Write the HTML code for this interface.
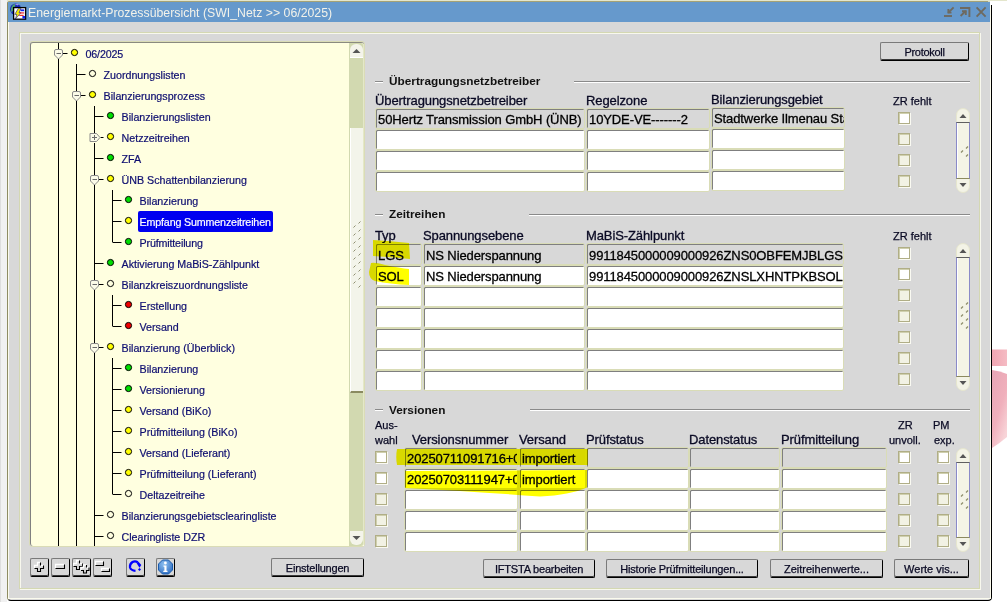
<!DOCTYPE html><html><head><meta charset="utf-8"><style>
html,body{margin:0;padding:0}
body{width:1007px;height:602px;position:relative;overflow:hidden;background:#fff;font-family:"Liberation Sans",sans-serif}
.a{position:absolute;box-sizing:border-box}
.t{position:absolute;white-space:pre;line-height:1}
.fld{position:absolute;box-sizing:border-box;border:1px solid #d9dcb6;box-shadow:inset 1px 1px 0 #7f7f7f;background:#fff;border-radius:2px;overflow:hidden;font-size:13px;color:#000;white-space:pre;line-height:1}
.fld.g{background:#d8d8d8}
.fld span{position:absolute;left:2px;top:4px;letter-spacing:-0.1px;-webkit-text-stroke:0.3px #000}
.cb{position:absolute;box-sizing:border-box;width:12px;height:12px;border:1px solid #b0ae86;box-shadow:inset 1px 1px 0 #cfcfae,1px 1px 0 #fafaf2;background:#f2f2e4}
.cb.w{background:#fff}
.btn{position:absolute;box-sizing:border-box;border:1px solid #7a7a7a;border-right:1px solid #000;border-bottom:1px solid #000;box-shadow:inset 0 -1px 0 #3a3a3a;border-radius:2px;background:#d8d8d8;font-size:11px;color:#0a0a24;text-align:center;line-height:1}
.btn span{position:absolute;left:0;right:0;top:4px;-webkit-text-stroke:0.25px #0a0a24}
.sec{position:absolute;height:1px;background:#8a8a8a}
.secT{position:absolute;font-weight:bold;font-size:11.8px;color:#111;white-space:pre;line-height:1}
.hdr{position:absolute;font-size:13px;color:#0a0a24;white-space:pre;line-height:1;letter-spacing:-0.1px;-webkit-text-stroke:0.3px #0a0a24}
.sm{position:absolute;font-size:11px;color:#0a0a24;white-space:pre;line-height:1;-webkit-text-stroke:0.25px #0a0a24}
.tr{position:absolute;font-size:10.7px;color:#0e0e70;white-space:pre;line-height:1;-webkit-text-stroke:0.2px #0e0e70}
</style></head><body>
<div class="a" style="left:0px;top:0px;width:1px;height:602px;background:#dedede"></div>
<div class="a" style="left:1px;top:0px;width:6px;height:602px;background:#f1f1f1"></div>
<div class="a" style="left:7px;top:0px;width:1000px;height:1px;background:#e4e6cc"></div>
<svg class="a" style="left:992px;top:340px" width="15" height="115"><defs><linearGradient id="pk" x1="0" x2="1"><stop offset="0" stop-color="#f0a6b2"/><stop offset="1" stop-color="#f5bcc4"/></linearGradient><linearGradient id="pk2" x1="0" y1="0" x2="0.6" y2="1"><stop offset="0" stop-color="#e6a4b4"/><stop offset="0.6" stop-color="#f0b0bc"/><stop offset="1" stop-color="#f8d4d8"/></linearGradient></defs><rect x="0" y="9.5" width="15" height="16.5" fill="url(#pk)"/><path d="M0 30 Q8 31 15 34 L15 97 Q8 103 0 108 Z" fill="url(#pk2)"/></svg>
<div class="a" style="left:7px;top:1px;width:985px;height:600px;background:#d8d8d8;border-left:1px solid #8e8c62;border-top:1px solid #a4a276;border-right:1px solid #000;border-bottom:1px solid #000;border-radius:2px 3px 4px 4px"></div>
<div class="a" style="left:990px;top:1px;width:2px;height:4px;background:#fff"></div>
<div class="a" style="left:988px;top:1px;width:2px;height:1px;background:#d8dcc0"></div>
<div class="a" style="left:8px;top:22px;width:1px;height:577px;background:#fbfbee"></div>
<div class="a" style="left:990px;top:5px;width:1px;height:594px;background:#fbfbee"></div>
<div class="a" style="left:9px;top:598px;width:981px;height:1px;background:#fbfbee"></div>
<div class="a" style="left:8px;top:2px;width:982px;height:20px;background:#6699cc"></div>
<div class="t" style="left:28px;top:7px;font-size:12.3px;color:#f2f2ea">Energiemarkt-Prozessübersicht (SWI_Netz &gt;&gt; 06/2025)</div>
<svg class="a" style="left:9px;top:2px" width="18" height="19" viewBox="0 0 18 19">
<circle cx="6.6" cy="7.2" r="5.6" fill="#1828b8"/><path d="M2.2 10.5 Q0.8 5.5 5 2 L6.5 2.8 L4.5 8 Z" fill="#4aa070"/><path d="M5.5 2 Q8 1.2 10 2.2 L8.5 3.5 Z" fill="#9a9ae8"/>
<rect x="4.6" y="5.6" width="12" height="11.6" fill="#fff" stroke="#000" stroke-width="1.3"/>
<path d="M9.2 6.6 L12 6.6 L10 10.6 L12 10.6 L6.4 17 L7.8 12.4 L5.8 12.4 Z" fill="#f4ec00" stroke="#10108a" stroke-width="0.6"/>
<rect x="11.6" y="7.4" width="3.6" height="1.8" fill="#1020e8"/><rect x="10.8" y="10.4" width="4.4" height="1.1" fill="#e81818"/><rect x="10.2" y="12.8" width="4.4" height="1.1" fill="#e81818"/><rect x="13.4" y="14" width="2.8" height="2.6" fill="#1020e8"/>
</svg>
<svg class="a" style="left:940px;top:5px" width="50" height="14" viewBox="0 0 50 14" fill="none" stroke="#6e6a60" stroke-width="1.9">
<path d="M4 11 H12"/><path d="M13.6 2.4 L8.2 7.8"/><path d="M8.4 4 V7.6 H11.5" />
<path d="M20 3 H29.4 V12"/><path d="M20.6 11 L25.8 5.8"/><path d="M22 6.2 H25.8 V10" />
<path d="M36.6 2.4 L45.6 11.6 M45.6 2.4 L36.6 11.6"/>
</svg>
<div class="a" style="left:20px;top:33px;width:961px;height:557px;border:1px solid #f8f8ee"></div>
<div class="a" style="left:19px;top:32px;width:961px;height:557px;border:1px solid #d4d8b2"></div>
<div class="a" style="left:29px;top:41px;width:336px;height:506px;border:1px solid #dadcb6;border-radius:3px"></div>
<div class="a" style="left:30px;top:42px;width:334px;height:504px;background:#ffffe0;border-left:1px solid #808080;border-top:1px solid #8a8a80;border-radius:3px 3px 0 3px"></div>
<svg class="a" style="left:0;top:0" width="364" height="546" viewBox="0 0 364 546"><g stroke="#000" stroke-width="1" fill="none"><path d="M58.5 43 V49"/><path d="M63.0 53.5 H67.5"/><path d="M76.5 64 V74"/><path d="M76.5 74.5 H85.5"/><path d="M76.5 74 V91"/><path d="M81.0 95.5 H85.5"/><path d="M94.5 106 V116"/><path d="M94.5 116.5 H103.5"/><path d="M94.5 116 V133"/><path d="M100.5 137.5 H103.5"/><path d="M94.5 143 V158"/><path d="M94.5 158.5 H103.5"/><path d="M94.5 158 V175"/><path d="M99.0 179.5 H103.5"/><path d="M112.5 190 V200"/><path d="M112.5 200.5 H121.5"/><path d="M112.5 200 V221"/><path d="M112.5 221.5 H121.5"/><path d="M112.5 221 V242"/><path d="M112.5 242.5 H121.5"/><path d="M94.5 185 V263"/><path d="M94.5 263.5 H103.5"/><path d="M94.5 263 V280"/><path d="M99.0 284.5 H103.5"/><path d="M112.5 295 V305"/><path d="M112.5 305.5 H121.5"/><path d="M112.5 305 V326"/><path d="M112.5 326.5 H121.5"/><path d="M94.5 290 V343"/><path d="M99.0 347.5 H103.5"/><path d="M112.5 358 V368"/><path d="M112.5 368.5 H121.5"/><path d="M112.5 368 V389"/><path d="M112.5 389.5 H121.5"/><path d="M112.5 389 V410"/><path d="M112.5 410.5 H121.5"/><path d="M112.5 410 V431"/><path d="M112.5 431.5 H121.5"/><path d="M112.5 431 V452"/><path d="M112.5 452.5 H121.5"/><path d="M112.5 452 V473"/><path d="M112.5 473.5 H121.5"/><path d="M112.5 473 V494"/><path d="M112.5 494.5 H121.5"/><path d="M94.5 353 V515"/><path d="M94.5 515.5 H103.5"/><path d="M94.5 515 V536"/><path d="M94.5 536.5 H103.5"/><path d="M58.5 59 V546"/><path d="M76.5 101 V546"/><path d="M94.5 536 V546"/></g><path d="M54.5 51 Q54.5 49.5 56.0 49.5 H61.0 Q62.5 49.5 62.5 51 V55 L58.5 59 L54.5 55 Z" fill="#fbfbe8" stroke="#8a8a8a" stroke-width="1"/><path d="M56.5 53.5 H61.0" stroke="#6a6a6a" stroke-width="1"/><path d="M72.5 93 Q72.5 91.5 74.0 91.5 H79.0 Q80.5 91.5 80.5 93 V97 L76.5 101 L72.5 97 Z" fill="#fbfbe8" stroke="#8a8a8a" stroke-width="1"/><path d="M74.5 95.5 H79.0" stroke="#6a6a6a" stroke-width="1"/><path d="M90.0 133.5 H96.5 L100.0 137.5 L96.5 141.5 H90.0 Z" fill="#fbfbe8" stroke="#8a8a8a" stroke-width="1"/><path d="M92.0 137.5 H97.0 M94.5 135 V140" stroke="#6a6a6a" stroke-width="1"/><path d="M90.5 177 Q90.5 175.5 92.0 175.5 H97.0 Q98.5 175.5 98.5 177 V181 L94.5 185 L90.5 181 Z" fill="#fbfbe8" stroke="#8a8a8a" stroke-width="1"/><path d="M92.5 179.5 H97.0" stroke="#6a6a6a" stroke-width="1"/><path d="M90.5 282 Q90.5 280.5 92.0 280.5 H97.0 Q98.5 280.5 98.5 282 V286 L94.5 290 L90.5 286 Z" fill="#fbfbe8" stroke="#8a8a8a" stroke-width="1"/><path d="M92.5 284.5 H97.0" stroke="#6a6a6a" stroke-width="1"/><path d="M90.5 345 Q90.5 343.5 92.0 343.5 H97.0 Q98.5 343.5 98.5 345 V349 L94.5 353 L90.5 349 Z" fill="#fbfbe8" stroke="#8a8a8a" stroke-width="1"/><path d="M92.5 347.5 H97.0" stroke="#6a6a6a" stroke-width="1"/><circle cx="74.5" cy="52.5" r="3.1" fill="#ffff00" stroke="#000" stroke-width="1"/><circle cx="92.5" cy="73.5" r="3.1" fill="#ffffe0" stroke="#000" stroke-width="1"/><circle cx="92.5" cy="94.5" r="3.1" fill="#ffff00" stroke="#000" stroke-width="1"/><circle cx="110.5" cy="115.5" r="3.1" fill="#00dd00" stroke="#000" stroke-width="1"/><circle cx="110.5" cy="136.5" r="3.1" fill="#ffff00" stroke="#000" stroke-width="1"/><circle cx="110.5" cy="157.5" r="3.1" fill="#00dd00" stroke="#000" stroke-width="1"/><circle cx="110.5" cy="178.5" r="3.1" fill="#ffff00" stroke="#000" stroke-width="1"/><circle cx="128.5" cy="199.5" r="3.1" fill="#00dd00" stroke="#000" stroke-width="1"/><circle cx="128.5" cy="220.5" r="3.1" fill="#ffff00" stroke="#000" stroke-width="1"/><circle cx="128.5" cy="241.5" r="3.1" fill="#00dd00" stroke="#000" stroke-width="1"/><circle cx="110.5" cy="262.5" r="3.1" fill="#00dd00" stroke="#000" stroke-width="1"/><circle cx="110.5" cy="283.5" r="3.1" fill="#ffffe0" stroke="#000" stroke-width="1"/><circle cx="128.5" cy="304.5" r="3.1" fill="#ee0000" stroke="#000" stroke-width="1"/><circle cx="128.5" cy="325.5" r="3.1" fill="#ee0000" stroke="#000" stroke-width="1"/><circle cx="110.5" cy="346.5" r="3.1" fill="#ffff00" stroke="#000" stroke-width="1"/><circle cx="128.5" cy="367.5" r="3.1" fill="#00dd00" stroke="#000" stroke-width="1"/><circle cx="128.5" cy="388.5" r="3.1" fill="#00dd00" stroke="#000" stroke-width="1"/><circle cx="128.5" cy="409.5" r="3.1" fill="#ffff00" stroke="#000" stroke-width="1"/><circle cx="128.5" cy="430.5" r="3.1" fill="#ffff00" stroke="#000" stroke-width="1"/><circle cx="128.5" cy="451.5" r="3.1" fill="#ffff00" stroke="#000" stroke-width="1"/><circle cx="128.5" cy="472.5" r="3.1" fill="#ffff00" stroke="#000" stroke-width="1"/><circle cx="128.5" cy="493.5" r="3.1" fill="#ffffe0" stroke="#000" stroke-width="1"/><circle cx="110.5" cy="514.5" r="3.1" fill="#ffffe0" stroke="#000" stroke-width="1"/><circle cx="110.5" cy="535.5" r="3.1" fill="#ffffe0" stroke="#000" stroke-width="1"/></svg>
<div class="a" style="left:138px;top:211px;width:135px;height:21px;background:#0000f0;border-radius:2px"></div>
<div class="tr" style="left:85.5px;top:49px;color:#0e0e70;-webkit-text-stroke-color:#0e0e70;letter-spacing:-0.15px;">06/2025</div>
<div class="tr" style="left:103.5px;top:70px;color:#0e0e70;-webkit-text-stroke-color:#0e0e70;">Zuordnungslisten</div>
<div class="tr" style="left:103.5px;top:91px;color:#0e0e70;-webkit-text-stroke-color:#0e0e70;">Bilanzierungsprozess</div>
<div class="tr" style="left:121.5px;top:112px;color:#0e0e70;-webkit-text-stroke-color:#0e0e70;">Bilanzierungslisten</div>
<div class="tr" style="left:121.5px;top:133px;color:#0e0e70;-webkit-text-stroke-color:#0e0e70;">Netzzeitreihen</div>
<div class="tr" style="left:121.5px;top:154px;color:#0e0e70;-webkit-text-stroke-color:#0e0e70;">ZFA</div>
<div class="tr" style="left:121.5px;top:175px;color:#0e0e70;-webkit-text-stroke-color:#0e0e70;">ÜNB Schattenbilanzierung</div>
<div class="tr" style="left:139.5px;top:196px;color:#0e0e70;-webkit-text-stroke-color:#0e0e70;">Bilanzierung</div>
<div class="tr" style="left:139.5px;top:217px;color:#fff;-webkit-text-stroke-color:#fff;letter-spacing:-0.15px;">Empfang Summenzeitreihen</div>
<div class="tr" style="left:139.5px;top:238px;color:#0e0e70;-webkit-text-stroke-color:#0e0e70;letter-spacing:-0.15px;">Prüfmitteilung</div>
<div class="tr" style="left:121.5px;top:259px;color:#0e0e70;-webkit-text-stroke-color:#0e0e70;">Aktivierung MaBiS-Zählpunkt</div>
<div class="tr" style="left:121.5px;top:280px;color:#0e0e70;-webkit-text-stroke-color:#0e0e70;">Bilanzkreiszuordnungsliste</div>
<div class="tr" style="left:139.5px;top:301px;color:#0e0e70;-webkit-text-stroke-color:#0e0e70;">Erstellung</div>
<div class="tr" style="left:139.5px;top:322px;color:#0e0e70;-webkit-text-stroke-color:#0e0e70;">Versand</div>
<div class="tr" style="left:121.5px;top:343px;color:#0e0e70;-webkit-text-stroke-color:#0e0e70;">Bilanzierung (Überblick)</div>
<div class="tr" style="left:139.5px;top:364px;color:#0e0e70;-webkit-text-stroke-color:#0e0e70;">Bilanzierung</div>
<div class="tr" style="left:139.5px;top:385px;color:#0e0e70;-webkit-text-stroke-color:#0e0e70;">Versionierung</div>
<div class="tr" style="left:139.5px;top:406px;color:#0e0e70;-webkit-text-stroke-color:#0e0e70;">Versand (BiKo)</div>
<div class="tr" style="left:139.5px;top:427px;color:#0e0e70;-webkit-text-stroke-color:#0e0e70;">Prüfmitteilung (BiKo)</div>
<div class="tr" style="left:139.5px;top:448px;color:#0e0e70;-webkit-text-stroke-color:#0e0e70;">Versand (Lieferant)</div>
<div class="tr" style="left:139.5px;top:469px;color:#0e0e70;-webkit-text-stroke-color:#0e0e70;">Prüfmitteilung (Lieferant)</div>
<div class="tr" style="left:139.5px;top:490px;color:#0e0e70;-webkit-text-stroke-color:#0e0e70;">Deltazeitreihe</div>
<div class="tr" style="left:121.5px;top:511px;color:#0e0e70;-webkit-text-stroke-color:#0e0e70;">Bilanzierungsgebietsclearingliste</div>
<div class="tr" style="left:121.5px;top:532px;color:#0e0e70;-webkit-text-stroke-color:#0e0e70;">Clearingliste DZR</div>
<div class="a" style="left:349px;top:43px;width:15px;height:503px;background:#d2d9b0;border-right:1px solid #e4e8c8;border-radius:0 3px 3px 0"></div>
<div class="a" style="left:350px;top:44px;width:13px;height:14px;background:#f4f4ea;border-radius:6px 6px 0 0;border-bottom:1px solid #fff"></div>
<svg class="a" style="left:350px;top:44px" width="14" height="14"><path d="M2.5 9 L6.5 5 L10.5 9Z" fill="#555"/></svg>
<div class="a" style="left:350px;top:128px;width:13px;height:265px;background:#f3f4ea;border-left:1px solid #fff;border-bottom:2px solid #8a8a60"></div>
<svg class="a" style="left:350px;top:215px" width="14" height="80" stroke="#8e8e70" stroke-width="1"><path d="M8.5 8.5 l2 -2"/><path d="M8.5 16.5 l2 -2"/><path d="M8.5 24.5 l2 -2"/><path d="M8.5 32.5 l2 -2"/><path d="M8.5 40.5 l2 -2"/><path d="M8.5 48.5 l2 -2"/><path d="M8.5 56.5 l2 -2"/><path d="M8.5 64.5 l2 -2"/><path d="M8.5 72.5 l2 -2"/><path d="M3.5 12.5 l2 -2"/><path d="M3.5 20.5 l2 -2"/><path d="M3.5 28.5 l2 -2"/><path d="M3.5 36.5 l2 -2"/><path d="M3.5 44.5 l2 -2"/><path d="M3.5 52.5 l2 -2"/><path d="M3.5 60.5 l2 -2"/><path d="M3.5 68.5 l2 -2"/></svg>
<div class="a" style="left:350px;top:531px;width:13px;height:14px;background:#f4f4ea;border-radius:0 0 6px 6px"></div>
<svg class="a" style="left:350px;top:531px" width="14" height="14"><path d="M2.5 5 L6.5 9 L10.5 5Z" fill="#555"/></svg>
<div class="btn" style="left:30px;top:558px;width:19px;height:19px;border-bottom-width:1px;overflow:hidden"><svg width="19" height="19" style="position:absolute;left:-1px;top:-1px"><path d="M4.5 10.5 V7.5 H7.5 V4.5 H10.5 M10.5 7.5 H13.5" stroke="#fff" stroke-width="1.3" fill="none"/><path d="M10.5 4.5 V7.5 M13.5 7.5 V10.5 H10.5 V13.5 H7.5 V10.5 H4.5" stroke="#000" stroke-width="1.1" fill="none"/></svg></div>
<div class="btn" style="left:51px;top:558px;width:19px;height:19px;border-bottom-width:1px;overflow:hidden"><svg width="19" height="19" style="position:absolute;left:-1px;top:-1px"><path d="M4.5 10.5 V6.5 H13.5" stroke="#fff" stroke-width="1.3" fill="none"/><path d="M13.5 6.5 V10.5 H4.5" stroke="#000" stroke-width="1.1" fill="none"/></svg></div>
<div class="btn" style="left:72px;top:558px;width:19px;height:19px;border-bottom-width:1px;overflow:hidden"><svg width="19" height="19" style="position:absolute;left:-1px;top:-1px"><path d="M1.5 8.5 V5.5 H4.5 V2.5 H7.5 M7.5 5.5 H10.5" stroke="#fff" stroke-width="1.3" fill="none"/><path d="M7.5 2.5 V5.5 M10.5 5.5 V8.5 H7.5 V11.5 H4.5 V8.5 H1.5" stroke="#000" stroke-width="1.1" fill="none"/><path d="M9 12.5 V9.5 H11.5 V7 H14.5 M14.5 9.5 H17" stroke="#fff" stroke-width="1.3" fill="none"/><path d="M14.5 7 V9.5 M17 9.5 V12.5 H14.5 V15 H11.5 V12.5 H9" stroke="#000" stroke-width="1.1" fill="none"/></svg></div>
<div class="btn" style="left:93px;top:558px;width:19px;height:19px;border-bottom-width:1px;overflow:hidden"><svg width="19" height="19" style="position:absolute;left:-1px;top:-1px"><path d="M2.5 7.5 V3.5 H10.5" stroke="#fff" stroke-width="1.3" fill="none"/><path d="M10.5 3.5 V7.5 H2.5" stroke="#000" stroke-width="1.1" fill="none"/><path d="M8.5 13.5 V10.5 H16.5" stroke="#fff" stroke-width="1.3" fill="none"/><path d="M16.5 10.5 V13.5 H8.5" stroke="#000" stroke-width="1.1" fill="none"/></svg></div>
<div class="btn" style="left:126px;top:558px;width:19px;height:19px;border-bottom-width:1px;overflow:hidden"><svg width="19" height="19" style="position:absolute;left:-1px;top:-1px"><path d="M11.8 4.2 Q9 2.5 6.5 4 Q3.5 6 4 9.5 Q5 12.5 9.5 12.8" fill="none" stroke="#0000ff" stroke-width="2.2"/><path d="M10.5 5 L12.5 3.8 L15.3 7 L13.5 9.8 Z" fill="#0000ff"/><path d="M13.5 10 L15 11.5 L13.5 13 L12 11.5Z" fill="#0000ff"/></svg></div>
<div class="btn" style="left:156px;top:558px;width:19px;height:19px;border-bottom-width:1px;overflow:hidden"><svg width="19" height="19" style="position:absolute;left:-1px;top:-1px"><defs><radialGradient id="ig" cx="0.4" cy="0.3" r="0.8"><stop offset="0" stop-color="#8ec0f0"/><stop offset="1" stop-color="#2a6ac0"/></radialGradient></defs><path d="M6.5 2 H12.5 L16.5 6 V12 L12.5 16 H6.5 L2.5 12 V6Z" fill="url(#ig)" stroke="#1a5aaa" stroke-width="1"/><circle cx="9.4" cy="5" r="1.4" fill="#fff"/><path d="M7.5 7.5 H10.5 V12.8 H11.5 V14 H7.3 V12.8 H8.4 V8.7 H7.5Z" fill="#fff"/></svg></div>
<div class="btn" style="left:271px;top:558px;width:93px;height:19px"><span style="top:4px;letter-spacing:-0.2px">Einstellungen</span></div>
<div class="btn" style="left:880px;top:42px;width:89px;height:19px"><span style="top:4px;letter-spacing:-0.3px">Protokoll</span></div>
<div class="sec" style="left:375px;top:81px;width:8px"></div>
<div class="sec" style="left:375px;top:82px;width:8px;background:#fff"></div>
<div class="secT" style="left:389px;top:76px">Übertragungsnetzbetreiber</div>
<div class="sec" style="left:574px;top:81px;width:396px"></div>
<div class="sec" style="left:574px;top:82px;width:396px;background:#fff"></div>
<div class="sec" style="left:375px;top:214px;width:8px"></div>
<div class="sec" style="left:375px;top:215px;width:8px;background:#fff"></div>
<div class="secT" style="left:389px;top:209px">Zeitreihen</div>
<div class="sec" style="left:529px;top:214px;width:441px"></div>
<div class="sec" style="left:529px;top:215px;width:441px;background:#fff"></div>
<div class="sec" style="left:375px;top:409px;width:8px"></div>
<div class="sec" style="left:375px;top:410px;width:8px;background:#fff"></div>
<div class="secT" style="left:389px;top:405px">Versionen</div>
<div class="sec" style="left:530px;top:409px;width:440px"></div>
<div class="sec" style="left:530px;top:410px;width:440px;background:#fff"></div>
<div class="hdr" style="left:375px;top:94px">Übertragungsnetzbetreiber</div>
<div class="hdr" style="left:586px;top:94px">Regelzone</div>
<div class="hdr" style="left:711px;top:93px">Bilanzierungsgebiet</div>
<div class="sm" style="left:893px;top:96px">ZR fehlt</div>
<div class="fld g" style="left:375px;top:108px;width:210px;height:21px"><span>50Hertz Transmission GmbH (ÜNB)</span></div>
<div class="fld g" style="left:586px;top:108px;width:124px;height:21px"><span>10YDE-VE-------2</span></div>
<div class="fld g" style="left:711px;top:107px;width:134px;height:21px"><span>Stadtwerke Ilmenau Stadtwerke</span></div>
<div class="cb w" style="left:898px;top:112px"></div>
<div class="fld" style="left:375px;top:129px;width:210px;height:21px"><span></span></div>
<div class="fld" style="left:586px;top:129px;width:124px;height:21px"><span></span></div>
<div class="fld" style="left:711px;top:128px;width:134px;height:21px"><span></span></div>
<div class="cb" style="left:898px;top:133px"></div>
<div class="fld" style="left:375px;top:150px;width:210px;height:21px"><span></span></div>
<div class="fld" style="left:586px;top:150px;width:124px;height:21px"><span></span></div>
<div class="fld" style="left:711px;top:149px;width:134px;height:21px"><span></span></div>
<div class="cb" style="left:898px;top:154px"></div>
<div class="fld" style="left:375px;top:171px;width:210px;height:21px"><span></span></div>
<div class="fld" style="left:586px;top:171px;width:124px;height:21px"><span></span></div>
<div class="fld" style="left:711px;top:170px;width:134px;height:21px"><span></span></div>
<div class="cb" style="left:898px;top:175px"></div>
<div class="a" style="left:956px;top:108px;width:14px;height:85px;background:#f3f3e6;border-radius:7px;border:1px solid #e6e6ce"></div>
<svg class="a" style="left:956px;top:108px" width="14" height="15"><path d="M3.5 10 L7 6 L10.5 10Z" fill="#555"/></svg>
<svg class="a" style="left:956px;top:178px" width="14" height="15"><path d="M3.5 5 L7 9 L10.5 5Z" fill="#555"/></svg>
<div class="a" style="left:956px;top:122px;width:14px;height:57px;border-left:1px solid #8a8ac8;border-right:1px solid #8a8ac8;border-top:1px solid #606060;border-bottom:1px solid #8c8a5e;background:#f4f4e6;box-shadow:inset 1px 0 0 #fff"></div>
<svg class="a" style="left:0;top:0" width="1007" height="602" stroke="#8c8c6a" stroke-width="1.2" fill="none"><path d="M966 148.5 l2 -2"/><path d="M966 156.5 l2 -2"/><path d="M961 152.5 l2 -2"/></svg>
<div class="hdr" style="left:375px;top:229px">Typ</div>
<div class="hdr" style="left:423px;top:229px">Spannungsebene</div>
<div class="hdr" style="left:586px;top:229px">MaBiS-Zählpunkt</div>
<div class="sm" style="left:893px;top:231px">ZR fehlt</div>
<div class="fld g" style="left:375px;top:243px;width:47px;height:22px"><span style="top:5px">LGS</span></div>
<div class="fld g" style="left:423px;top:243px;width:162px;height:22px"><span style="top:5px">NS Niederspannung</span></div>
<div class="fld g" style="left:586px;top:243px;width:258px;height:22px"><span style="top:5px">9911845000009000926ZNS0OBFEMJBLGS</span></div>
<div class="cb w" style="left:898px;top:247px"></div>
<div class="fld" style="left:375px;top:265px;width:47px;height:21px"><span>SOL</span></div>
<div class="fld" style="left:423px;top:265px;width:162px;height:21px"><span>NS Niederspannung</span></div>
<div class="fld" style="left:586px;top:265px;width:258px;height:21px"><span>9911845000009000926ZNSLXHNTPKBSOL</span></div>
<div class="cb w" style="left:898px;top:268px"></div>
<div class="fld" style="left:375px;top:286px;width:47px;height:21px"><span></span></div>
<div class="fld" style="left:423px;top:286px;width:162px;height:21px"><span></span></div>
<div class="fld" style="left:586px;top:286px;width:258px;height:21px"><span></span></div>
<div class="cb" style="left:898px;top:289px"></div>
<div class="fld" style="left:375px;top:307px;width:47px;height:21px"><span></span></div>
<div class="fld" style="left:423px;top:307px;width:162px;height:21px"><span></span></div>
<div class="fld" style="left:586px;top:307px;width:258px;height:21px"><span></span></div>
<div class="cb" style="left:898px;top:310px"></div>
<div class="fld" style="left:375px;top:328px;width:47px;height:21px"><span></span></div>
<div class="fld" style="left:423px;top:328px;width:162px;height:21px"><span></span></div>
<div class="fld" style="left:586px;top:328px;width:258px;height:21px"><span></span></div>
<div class="cb" style="left:898px;top:331px"></div>
<div class="fld" style="left:375px;top:349px;width:47px;height:21px"><span></span></div>
<div class="fld" style="left:423px;top:349px;width:162px;height:21px"><span></span></div>
<div class="fld" style="left:586px;top:349px;width:258px;height:21px"><span></span></div>
<div class="cb" style="left:898px;top:352px"></div>
<div class="fld" style="left:375px;top:370px;width:47px;height:21px"><span></span></div>
<div class="fld" style="left:423px;top:370px;width:162px;height:21px"><span></span></div>
<div class="fld" style="left:586px;top:370px;width:258px;height:21px"><span></span></div>
<div class="cb" style="left:898px;top:373px"></div>
<div class="a" style="left:956px;top:243px;width:14px;height:148px;background:#f3f3e6;border-radius:7px;border:1px solid #e6e6ce"></div>
<svg class="a" style="left:956px;top:243px" width="14" height="15"><path d="M3.5 10 L7 6 L10.5 10Z" fill="#555"/></svg>
<svg class="a" style="left:956px;top:376px" width="14" height="15"><path d="M3.5 5 L7 9 L10.5 5Z" fill="#555"/></svg>
<div class="a" style="left:956px;top:257px;width:14px;height:120px;border-left:1px solid #8a8ac8;border-right:1px solid #8a8ac8;border-top:1px solid #606060;border-bottom:1px solid #8c8a5e;background:#f4f4e6;box-shadow:inset 1px 0 0 #fff"></div>
<svg class="a" style="left:0;top:0" width="1007" height="602" stroke="#8c8c6a" stroke-width="1.2" fill="none"><path d="M966 304.5 l2 -2"/><path d="M966 312.5 l2 -2"/><path d="M966 320.5 l2 -2"/><path d="M966 328.5 l2 -2"/><path d="M961 308.5 l2 -2"/><path d="M961 316.5 l2 -2"/><path d="M961 324.5 l2 -2"/></svg>
<div class="sm" style="left:375px;top:420px">Aus-</div>
<div class="sm" style="left:375px;top:435px">wahl</div>
<div class="hdr" style="left:412px;top:433px">Versionsnummer</div>
<div class="hdr" style="left:519px;top:433px">Versand</div>
<div class="hdr" style="left:586px;top:433px">Prüfstatus</div>
<div class="hdr" style="left:689px;top:433px">Datenstatus</div>
<div class="hdr" style="left:781px;top:433px">Prüfmitteilung</div>
<div class="sm" style="left:898px;top:420px">ZR</div>
<div class="sm" style="left:889px;top:435px">unvoll.</div>
<div class="sm" style="left:933px;top:420px">PM</div>
<div class="sm" style="left:934px;top:435px">exp.</div>
<div class="cb w" style="left:375px;top:451px"></div>
<div class="fld g" style="left:404px;top:447px;width:114px;height:21px"><span>20250711091716+0200</span></div>
<div class="fld g" style="left:519px;top:447px;width:67px;height:21px"><span>importiert</span></div>
<div class="fld g" style="left:586px;top:447px;width:103px;height:21px"><span></span></div>
<div class="fld g" style="left:689px;top:447px;width:91px;height:21px"><span></span></div>
<div class="fld g" style="left:781px;top:447px;width:106px;height:21px"><span></span></div>
<div class="cb w" style="left:898px;top:451px"></div>
<div class="cb w" style="left:937px;top:451px"></div>
<div class="cb w" style="left:375px;top:472px"></div>
<div class="fld" style="left:404px;top:468px;width:114px;height:21px"><span>20250703111947+0200</span></div>
<div class="fld" style="left:519px;top:468px;width:67px;height:21px"><span>importiert</span></div>
<div class="fld" style="left:586px;top:468px;width:103px;height:21px"><span></span></div>
<div class="fld" style="left:689px;top:468px;width:91px;height:21px"><span></span></div>
<div class="fld" style="left:781px;top:468px;width:106px;height:21px"><span></span></div>
<div class="cb w" style="left:898px;top:472px"></div>
<div class="cb w" style="left:937px;top:472px"></div>
<div class="cb" style="left:375px;top:493px"></div>
<div class="fld" style="left:404px;top:489px;width:114px;height:21px"><span></span></div>
<div class="fld" style="left:519px;top:489px;width:67px;height:21px"><span></span></div>
<div class="fld" style="left:586px;top:489px;width:103px;height:21px"><span></span></div>
<div class="fld" style="left:689px;top:489px;width:91px;height:21px"><span></span></div>
<div class="fld" style="left:781px;top:489px;width:106px;height:21px"><span></span></div>
<div class="cb" style="left:898px;top:493px"></div>
<div class="cb" style="left:937px;top:493px"></div>
<div class="cb" style="left:375px;top:514px"></div>
<div class="fld" style="left:404px;top:510px;width:114px;height:21px"><span></span></div>
<div class="fld" style="left:519px;top:510px;width:67px;height:21px"><span></span></div>
<div class="fld" style="left:586px;top:510px;width:103px;height:21px"><span></span></div>
<div class="fld" style="left:689px;top:510px;width:91px;height:21px"><span></span></div>
<div class="fld" style="left:781px;top:510px;width:106px;height:21px"><span></span></div>
<div class="cb" style="left:898px;top:514px"></div>
<div class="cb" style="left:937px;top:514px"></div>
<div class="cb" style="left:375px;top:535px"></div>
<div class="fld" style="left:404px;top:531px;width:114px;height:21px"><span></span></div>
<div class="fld" style="left:519px;top:531px;width:67px;height:21px"><span></span></div>
<div class="fld" style="left:586px;top:531px;width:103px;height:21px"><span></span></div>
<div class="fld" style="left:689px;top:531px;width:91px;height:21px"><span></span></div>
<div class="fld" style="left:781px;top:531px;width:106px;height:21px"><span></span></div>
<div class="cb" style="left:898px;top:535px"></div>
<div class="cb" style="left:937px;top:535px"></div>
<div class="a" style="left:956px;top:448px;width:14px;height:104px;background:#f3f3e6;border-radius:7px;border:1px solid #e6e6ce"></div>
<svg class="a" style="left:956px;top:448px" width="14" height="15"><path d="M3.5 10 L7 6 L10.5 10Z" fill="#555"/></svg>
<svg class="a" style="left:956px;top:537px" width="14" height="15"><path d="M3.5 5 L7 9 L10.5 5Z" fill="#555"/></svg>
<div class="a" style="left:956px;top:462px;width:14px;height:76px;border-left:1px solid #8a8ac8;border-right:1px solid #8a8ac8;border-top:1px solid #606060;border-bottom:1px solid #8c8a5e;background:#f4f4e6;box-shadow:inset 1px 0 0 #fff"></div>
<svg class="a" style="left:0;top:0" width="1007" height="602" stroke="#8c8c6a" stroke-width="1.2" fill="none"><path d="M966 492.5 l2 -2"/><path d="M966 500.5 l2 -2"/><path d="M966 508.5 l2 -2"/><path d="M961 496.5 l2 -2"/><path d="M961 504.5 l2 -2"/></svg>
<div class="btn" style="left:483px;top:559px;width:112px;height:19px"><span style="letter-spacing:-0.2px">IFTSTA bearbeiten</span></div>
<div class="btn" style="left:606px;top:559px;width:152px;height:19px"><span style="letter-spacing:-0.2px">Historie Prüfmitteilungen...</span></div>
<div class="btn" style="left:770px;top:559px;width:113px;height:19px"><span>Zeitreihenwerte...</span></div>
<div class="btn" style="left:894px;top:559px;width:75px;height:19px"><span>Werte vis...</span></div>
<svg class="a" style="left:0;top:0;mix-blend-mode:multiply" width="1007" height="602" fill="#ffff00">
<path d="M373 240 Q390 241 409 243 L410 259 Q390 257 373 256 Z"/>
<path d="M371 263 Q375 262 385 265 Q400 268 409 269 L409 285 Q390 284 375 281 Q369 279 369 272 Z"/>
<path d="M397 449 H588 V465 H397 Q395.5 457 397 449 Z"/>
<path d="M405 471 L587 470 L587 487.5 Q570 495 540 496.5 Q480 492 405 488 Z"/>
</svg>
</body></html>
